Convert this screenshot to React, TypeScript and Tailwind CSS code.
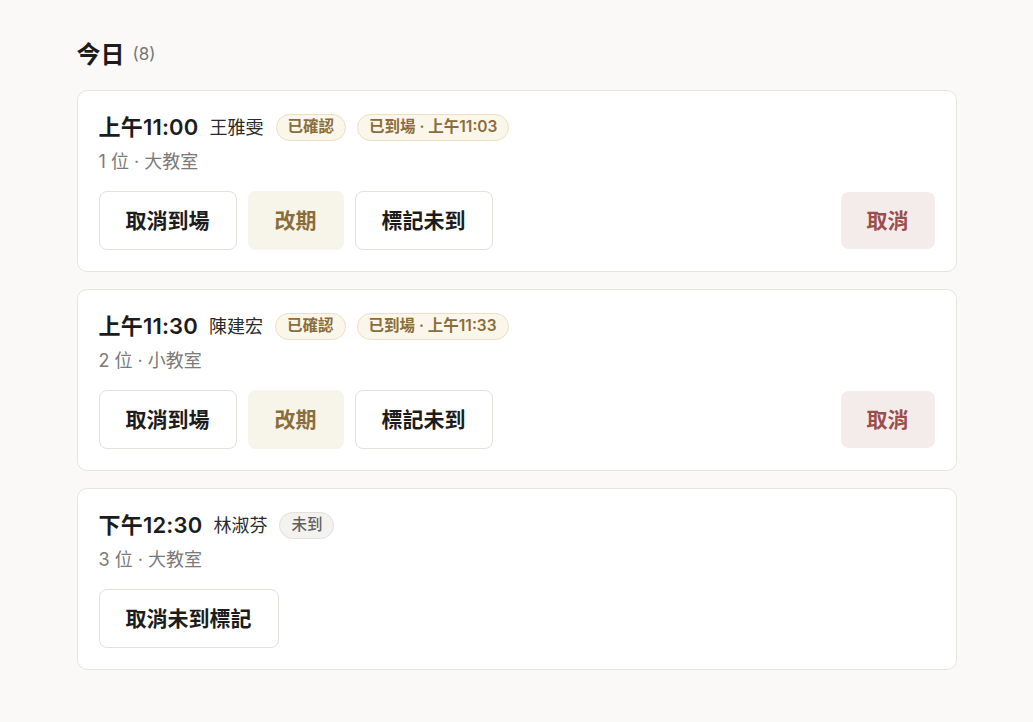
const font = { fontFamily: '"Inter", "Noto Sans CJK TC", sans-serif' };

type Badge = { label: string; tone: "gold" | "gray" };
type Booking = {
  time: string;
  name: string;
  meta: string;
  badges: Badge[];
  actions: "arrived" | "noshow";
};

const bookings: Booking[] = [
  {
    time: "上午11:00",
    name: "王雅雯",
    meta: "1 位 · 大教室",
    badges: [
      { label: "已確認", tone: "gold" },
      { label: "已到場 · 上午11:03", tone: "gold" },
    ],
    actions: "arrived",
  },
  {
    time: "上午11:30",
    name: "陳建宏",
    meta: "2 位 · 小教室",
    badges: [
      { label: "已確認", tone: "gold" },
      { label: "已到場 · 上午11:33", tone: "gold" },
    ],
    actions: "arrived",
  },
  {
    time: "下午12:30",
    name: "林淑芬",
    meta: "3 位 · 大教室",
    badges: [{ label: "未到", tone: "gray" }],
    actions: "noshow",
  },
];

function Pill({ badge }: { badge: Badge }) {
  const cls =
    badge.tone === "gold"
      ? "border-[#ecdfc2] bg-[#fbf6ea] text-[#8a6d3b] font-semibold"
      : "border-[#e2e0db] bg-[#f3f2ef] text-[#5f5f5f] font-medium";
  return (
    <span className={`inline-flex h-[27px] items-center rounded-full border px-[11px] text-[15.5px] ${cls}`}>
      {badge.label}
    </span>
  );
}

function OutlineButton({ children }: { children: React.ReactNode }) {
  return (
    <button className="h-[59px] rounded-[8px] border border-[#e3e1dc] bg-white px-[26px] text-[21px] font-semibold text-[#1c1c1c]">
      {children}
    </button>
  );
}

function BookingCard({ b }: { b: Booking }) {
  return (
    <div className="rounded-[10px] border border-[#e6e4df] bg-white p-[21px]">
      <div className="flex h-[30px] items-center">
        <span className="text-[22px] font-semibold tracking-[0.2px] text-[#1c1c1c]">{b.time}</span>
        <span className="ml-[11px] text-[18px] text-[#2a2a2a]">{b.name}</span>
        <div className="ml-[12px] flex items-center gap-[11px]">
          {b.badges.map((x) => (
            <Pill key={x.label} badge={x} />
          ))}
        </div>
      </div>
      <div className="mt-[9px] text-[18px] leading-[22px] text-[#7a7a7a]">{b.meta}</div>
      <div className="mt-[18px] flex items-center gap-[11px]">
        {b.actions === "arrived" ? (
          <>
            <OutlineButton>取消到場</OutlineButton>
            <button className="h-[59px] rounded-[8px] bg-[#f7f4ea] px-[27px] text-[21px] font-semibold text-[#8a6d3b]">
              改期
            </button>
            <OutlineButton>標記未到</OutlineButton>
            <button className="ml-auto h-[57px] rounded-[8px] bg-[#f4eceb] px-[26px] text-[21px] font-semibold text-[#9b4e4c]">
              取消
            </button>
          </>
        ) : (
          <OutlineButton>取消未到標記</OutlineButton>
        )}
      </div>
    </div>
  );
}

export default function App() {
  return (
    <div className="min-h-screen bg-[#faf9f7] pt-[39px]" style={font}>
      <div className="mx-auto w-[880px]">
        <h2 className="flex h-[32px] items-center gap-[8px]">
          <span className="text-[24px] font-semibold text-[#1c1c1c]">今日</span>
          <span className="text-[17px] text-[#777]">(8)</span>
        </h2>
        <div className="mt-[19px] flex flex-col gap-[17px]">
          {bookings.map((b) => (
            <BookingCard key={b.time} b={b} />
          ))}
        </div>
      </div>
    </div>
  );
}
